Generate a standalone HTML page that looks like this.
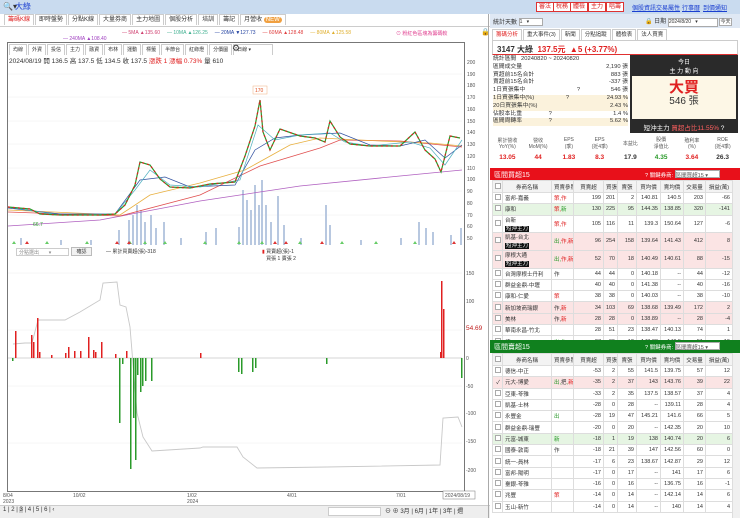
<!DOCTYPE html>
<html><head><meta charset="utf-8"><style>
*{box-sizing:border-box;margin:0;padding:0}
body{width:740px;height:518px;overflow:hidden;background:#fff;font-family:"Liberation Sans","Noto Sans CJK TC",sans-serif;font-size:6px;color:#333;position:relative}
.abs{position:absolute}
.top{left:0;top:0;width:740px;height:14px;background:#c9dbef}
.btn{position:absolute;top:2px;height:10px;border:1px solid #d33;background:#fff;color:#d22;font-size:6px;line-height:8px;padding:0 2px}
.lnk{position:absolute;top:3px;color:#1a3fd0;text-decoration:underline;font-size:6px}
.tabs span{display:inline-block;border:1px solid #ccc;border-bottom:none;padding:1px 3px;margin-right:1px;height:11px;line-height:9px;background:#fff}
table{border-collapse:collapse;table-layout:fixed}
.t td{border:1px solid #ddd;height:11.3px;text-align:right;padding:0 2px;font-size:5.5px;white-space:nowrap;overflow:hidden}
.t td.n{text-align:left}
.t tr.h td{text-align:center;background:#f3f3f3;height:12px}
.pk td{background:#fbe4e4}
.gr td{background:#e6f5e3}
.tag{background:#111;color:#fff;padding:0 1px}
.r{color:#e02020}.g{color:#2a9a2a}
.cb{display:inline-block;width:6px;height:6px;border:1px solid #aaa;background:#fff}
svg path.ln{fill:none}
</style></head><body>
<div class="abs top"></div>
<div class="abs" style="left:3px;top:2px;font-size:8px;color:#333">&#128269;▾</div>
<div class="abs" style="left:15px;top:1px;font-size:8px;color:#1a3fd0">大綠</div>
<div class="btn" style="left:536px">審法</div><div class="btn" style="left:553px">稅務</div><div class="btn" style="left:570px">體檢</div><div class="btn" style="left:588px">主力</div><div class="btn" style="left:606px">唱籌</div>
<div class="lnk" style="left:632px">個股資訊</div><div class="lnk" style="left:656px">交易屬性</div><div class="lnk" style="left:682px">行事曆</div><div class="lnk" style="left:703px">到價通知</div>

<div class="abs tabs" style="left:4px;top:14px;white-space:nowrap"><span style="color:#d22">籌碼K線</span><span>即時盤勢</span><span>分點K線</span><span>大量券商</span><span>主力地圖</span><span>個股分析</span><span>培訓</span><span>籌記</span><span>月營收 <b style="background:#f0a040;color:#fff;border-radius:3px;padding:0 2px;font-weight:normal">NEW</b></span></div>
<div class="abs" style="left:0;top:26px;width:490px;border-top:1px solid #ccc"></div>
<div class="abs" style="left:122px;top:30px;white-space:nowrap;font-size:5px"><span style="color:#d04070">— 5MA ▲135.60</span> &nbsp; &nbsp; <span style="color:#40b090">— 10MA ▲126.25</span> &nbsp; &nbsp; <span style="color:#2040a0">— 20MA ▼127.73</span> &nbsp; &nbsp; <span style="color:#e04040">— 60MA ▲128.48</span> &nbsp; &nbsp; <span style="color:#e0b030">— 80MA ▲125.58</span></div>
<div class="abs" style="left:63px;top:36px;font-size:5px;color:#a040c0">— 240MA ▲108.40</div>
<div class="abs" style="left:396px;top:30px;font-size:5px;color:#e04090">⊙ 粉紅色區塊為籌碼較</div>
<div class="abs" style="left:481px;top:28px;font-size:7px">🔒</div>

<div class="abs" style="left:7px;top:42px;width:458px;height:450px;border:1px solid #777"></div>
<div class="abs tabs" style="left:9px;top:44px;white-space:nowrap;font-size:5px"><span>均線</span><span>外資</span><span>投信</span><span>主力</span><span>融資</span><span>布林</span><span>運動</span><span>標籤</span><span>半節台</span><span>紅綠燈</span><span>分價圖</span><span style="width:40px">日線 ▾</span></div>
<div class="abs" style="left:232px;top:43px;font-size:9px">⚙</div>
<div class="abs" style="left:9px;top:55px;font-size:6.5px;white-space:nowrap">2024/08/19 開 136.5 高 137.5 低 134.5 收 137.5 <span class="r">漲跌 1 漲幅 0.73%</span> 量 610</div>

<svg class="abs" style="left:0;top:0" width="490" height="518" viewBox="0 0 490 518">
<g stroke="#eee" stroke-width=".5">
<path d="M8,74H462M8,97H462M8,121H462M8,144H462M8,168H462M8,191H462M8,215H462M8,273H462M8,330H462M8,386H462M8,443H462"/>
</g>
<g fill="#b8c8e0">
<rect x="118" y="230" width="2" height="15"/><rect x="128" y="220" width="2" height="25"/><rect x="132" y="215" width="2" height="30"/><rect x="136" y="205" width="2" height="40"/><rect x="140" y="210" width="2" height="35"/><rect x="144" y="222" width="2" height="23"/><rect x="150" y="215" width="2" height="30"/><rect x="155" y="228" width="2" height="17"/><rect x="163" y="222" width="2" height="23"/>
<rect x="205" y="232" width="2" height="13"/><rect x="215" y="228" width="2" height="17"/><rect x="238" y="227" width="2" height="18"/><rect x="242" y="190" width="2" height="55"/><rect x="246" y="200" width="2" height="45"/><rect x="250" y="210" width="2" height="35"/><rect x="254" y="185" width="2" height="60"/><rect x="258" y="205" width="2" height="40"/><rect x="261" y="180" width="2" height="65"/><rect x="265" y="205" width="2" height="40"/><rect x="270" y="222" width="2" height="23"/><rect x="277" y="196" width="2" height="49"/><rect x="283" y="225" width="2" height="20"/><rect x="325" y="205" width="2" height="40"/><rect x="329" y="225" width="2" height="20"/><rect x="418" y="222" width="2" height="23"/><rect x="425" y="228" width="2" height="17"/><rect x="432" y="232" width="2" height="13"/><rect x="450" y="235" width="2" height="10"/><rect x="460" y="228" width="2" height="17"/>
<rect x="20" y="238" width="2" height="7"/><rect x="60" y="240" width="2" height="5"/><rect x="90" y="240" width="2" height="5"/><rect x="180" y="238" width="2" height="7"/><rect x="300" y="238" width="2" height="7"/><rect x="360" y="240" width="2" height="5"/><rect x="400" y="238" width="2" height="7"/>
</g>
<path class="ln" stroke="#b060c0" stroke-width="0.8" d="M8,226 L100,220 L200,201 L300,186 L400,176 L462,170"/>
<path class="ln" stroke="#e05050" stroke-width="0.8" d="M8,212 L120,216 L200,195 L260,166 L320,148 L340,140 L400,141 L462,147"/>
<path class="ln" stroke="#e8b040" stroke-width="0.8" d="M8,210 L120,215 L150,195 L200,183 L245,170 L290,145 L320,138 L380,141 L430,143 L462,146"/>
<path class="ln" stroke="#3050a0" stroke-width="0.7" d="M8,208 L60,214 L115,214 L140,180 L165,177 L190,187 L235,185 L255,150 L275,138 L300,135 L340,133 L370,145 L400,146 L425,140 L445,158 L462,145"/>
<path class="ln" stroke="#50b0c0" stroke-width="0.7" d="M8,207 L60,215 L115,214 L135,190 L150,170 L170,185 L200,187 L240,180 L258,125 L275,140 L300,135 L330,133 L345,142 L370,146 L410,142 L430,148 L445,165 L462,140"/>
<path class="ln" stroke="#2a9a2a" stroke-width="1.2" d="M8,207 L30,209 L40,214 L60,215 L100,215 L115,214 L125,205 L135,185 L140,162 L150,165 L160,179 L170,187 L190,188 L210,184 L235,182 L245,156 L255,126 L260,100 L263,132 L270,150 L280,129 L300,136 L315,138 L325,142 L330,121 L340,137 L350,144 L370,146 L400,146 L415,132 L425,150 L435,159 L441,172 L450,136 L460,138"/>
<path class="ln" stroke="#e02020" stroke-width="1.2" stroke-dasharray="2 3" d="M8,207 L30,209 L40,214 L60,215 L100,215 L115,214 L125,205 L135,185 L140,162 L150,165 L160,179 L170,187 L190,188 L210,184 L235,182 L245,156 L255,126 L260,100 L263,132 L270,150 L280,129 L300,136 L315,138 L325,142 L330,121 L340,137 L350,144 L370,146 L400,146 L415,132 L425,150 L435,159 L441,172 L450,136 L460,138"/>
<rect x="253" y="86" width="14" height="8" fill="#fff" stroke="#f0b080" stroke-width=".5"/><text x="255" y="92" font-size="5" fill="#e05020">170</text>
<text x="33" y="226" font-size="5" fill="#2a9a2a">66.7</text>
<g fill="#6c6" ><path d="M12,244 l2,-3 2,3z M45,244 l2,-3 2,3z M85,244 l2,-3 2,3z M128,244 l2,-3 2,3z M143,244 l2,-3 2,3z M163,244 l2,-3 2,3z M203,244 l2,-3 2,3z M237,244 l2,-3 2,3z M260,244 l2,-3 2,3z M298,244 l2,-3 2,3z M340,244 l2,-3 2,3z M374,244 l2,-3 2,3z M413,244 l2,-3 2,3z"/></g>
<g fill="#d33"><path d="M25,244 l2,-3 2,3z M115,244 l2,-3 2,3z M127,244 l2,-3 2,3z M273,244 l2,-3 2,3z M284,244 l2,-3 2,3z M320,244 l2,-3 2,3z M452,244 l2,-3 2,3z"/></g>
<g font-size="5" fill="#555"><text x="467" y="64">200</text><text x="467" y="76">190</text><text x="467" y="87">180</text><text x="467" y="99">170</text><text x="467" y="111">160</text><text x="467" y="123">150</text><text x="467" y="134">140</text><text x="467" y="146">130</text><text x="467" y="158">120</text><text x="467" y="170">110</text><text x="467" y="181">100</text><text x="467" y="193">90</text><text x="467" y="205">80</text><text x="467" y="217">70</text><text x="467" y="228">60</text><text x="467" y="240">50</text>
<text x="466" y="275">150</text><text x="466" y="303">100</text><text x="466" y="360">0</text><text x="466" y="388">-50</text><text x="466" y="415">-100</text><text x="466" y="443">-150</text><text x="466" y="472">-200</text></g>
<text x="466" y="330" font-size="6.5" fill="#c02020">54.69</text>
<path class="ln" stroke="#aaa" stroke-width="0.5" d="M8,358 L462,358"/>
<path class="ln" stroke="#c8c8c8" stroke-width="0.9" d="M13,344 L25,343 L32,343 L38,320 L65,320 L80,312 L100,300 L103,283 L117,282 L120,305 L126,307 L130,327 L137,413 L143,437 L152,451 L200,448 L203,447 L237,447 L243,457 L257,468 L327,467 L440,465 L443,418 L458,417 L462,427"/>
<g fill="#e02020">
<rect x="15" y="331" width="1.5" height="27"/><rect x="31" y="335" width="1.5" height="23"/><rect x="33" y="342" width="1.5" height="16"/><rect x="37" y="318" width="1.5" height="40"/><rect x="39" y="352" width="1.5" height="6"/><rect x="51" y="355" width="1.5" height="3"/><rect x="65" y="353" width="1.5" height="5"/><rect x="68" y="347" width="1.5" height="11"/><rect x="74" y="351" width="1.5" height="7"/><rect x="80" y="351" width="1.5" height="7"/><rect x="88" y="337" width="1.5" height="21"/><rect x="93" y="350" width="1.5" height="8"/><rect x="95" y="352" width="1.5" height="6"/><rect x="101" y="342" width="1.5" height="16"/><rect x="115" y="354" width="1.5" height="4"/><rect x="126" y="351" width="1.5" height="7"/><rect x="200" y="353" width="1.5" height="5"/><rect x="440" y="352" width="1.5" height="6"/><rect x="441" y="281" width="1.5" height="77"/><rect x="443" y="309" width="1.5" height="49"/>
</g>
<g fill="#2a9a2a">
<rect x="12" y="358" width="1.5" height="3"/><rect x="119" y="358" width="1.5" height="65"/><rect x="122" y="358" width="1.5" height="6"/><rect x="130" y="358" width="1.5" height="111"/><rect x="133" y="358" width="1.5" height="60"/><rect x="135" y="358" width="1.5" height="102"/><rect x="137" y="358" width="1.5" height="17"/><rect x="140" y="358" width="1.5" height="34"/><rect x="142" y="358" width="1.5" height="28"/><rect x="145" y="358" width="1.5" height="23"/><rect x="151" y="358" width="1.5" height="23"/><rect x="238" y="358" width="1.5" height="14"/><rect x="241" y="358" width="1.5" height="16"/><rect x="252" y="358" width="1.5" height="14"/><rect x="255" y="358" width="1.5" height="10"/><rect x="326" y="358" width="1.5" height="6"/><rect x="461" y="358" width="1.5" height="20"/>
</g>
<g font-size="5" fill="#555"><text x="3" y="497">8/04</text><text x="3" y="503">2023</text><text x="73" y="497">10/02</text><text x="187" y="497">1/02</text><text x="187" y="503">2024</text><text x="287" y="497">4/01</text><text x="396" y="497">7/01</text></g>
<rect x="443" y="491" width="32" height="8" fill="#fff" stroke="#777" stroke-width=".5"/><text x="445" y="497" font-size="5" fill="#555">2024/08/19</text>
</svg>
<div class="abs" style="left:16px;top:248px;width:53px;height:8px;border:1px solid #ccc;font-size:5px;color:#888;padding-left:2px">分點選出 &nbsp; &nbsp; &nbsp; ▾</div>
<div class="abs" style="left:71px;top:247px;width:21px;height:9px;border:1px solid #bbb;background:#f2f2f2;font-size:5px;text-align:center">確認</div>
<div class="abs" style="left:106px;top:248px;font-size:5px">— 累計買賣超(張)-318</div>
<div class="abs" style="left:262px;top:248px;font-size:5px"><span class="r">▮</span> 買賣超(張)-1<br>&nbsp;&nbsp;&nbsp;買張 1 賣張 2</div>
<div class="abs" style="left:0;top:505px;width:490px;height:13px;background:#eee;border-top:1px solid #ccc"></div>
<div class="abs" style="left:3px;top:507px;font-size:6px;white-space:nowrap">1 | 2 | <span style="background:#ccc">3</span> | 4 | 5 | 6 | ‹</div>
<div class="abs" style="left:328px;top:507px;width:53px;height:9px;background:#fff;border:1px solid #ccc"></div>
<div class="abs" style="left:385px;top:506px;font-size:6px;white-space:nowrap">⊖ ⊕ 3月 | 6月 | 1年 | 3年 | 週</div>
<div class="abs" style="left:488px;top:14px;width:1px;height:504px;background:#aaa"></div>

<!-- right panel -->
<div class="abs" style="left:490px;top:14px;width:250px;height:14px;background:#dfe8f4"></div>
<div class="abs" style="left:493px;top:17px;font-size:6px">統計天數 <span style="display:inline-block;width:24px;height:8px;background:#fff;border:1px solid #aaa;vertical-align:middle;font-size:5px">1 &nbsp; ▾</span></div>
<div class="abs" style="left:645px;top:16px;font-size:6px;white-space:nowrap">🔒 日期 <span style="display:inline-block;width:50px;height:9px;background:#fff;border:1px solid #aaa;font-size:5px">2024/8/20 &nbsp; ▾</span> <span style="border:1px solid #aaa;background:#fff;font-size:5px">今天</span></div>
<div class="abs tabs" style="left:492px;top:29px;white-space:nowrap;font-size:5.5px"><span class="r">籌碼分析</span><span>重大事件(3)</span><span>新聞</span><span>分點追蹤</span><span>體檢表</span><span>法人買賣</span></div>
<div class="abs" style="left:492px;top:40px;width:246px;height:15px;border:1px solid #ccc;border-bottom:1.5px solid #e03030;font-size:8px;font-weight:bold;padding:3px 4px;white-space:nowrap">3147 大綠 &nbsp;<span class="r">137.5元 &nbsp;▲5 (+3.77%)</span></div>
<div class="abs" style="left:493px;top:56px;width:135px;font-size:5.8px;line-height:7.8px">
<div>統計區間 &nbsp; 20240820 ~ 20240820</div>
<div>區間成交量<span style="float:right">2,190 張</span></div>
<div>買超前15名合計<span style="float:right">883 張</span></div>
<div>賣超前15名合計<span style="float:right">-337 張</span></div>
<div>1日買張集中 <span style="margin-left:50px">?</span><span style="float:right">546 張</span></div>
<div style="background:#fbf2dc">1日買張集中(%) <span style="margin-left:30px">?</span><span style="float:right">24.93 %</span></div>
<div style="background:#fbf2dc">20日買張集中(%)<span style="float:right">2.43 %</span></div>
<div>佔股本比重 <span style="margin-left:25px">?</span><span style="float:right">1.4 %</span></div>
<div style="background:#fbf2dc">區間周轉率 <span style="margin-left:25px">?</span><span style="float:right">5.62 %</span></div>
</div>
<div class="abs" style="left:630px;top:55px;width:108px;height:78px;background:#2a2a2a"></div>
<div class="abs" style="left:632px;top:57px;width:104px;height:10px;color:#fff;text-align:center;font-size:6px">今日</div>
<div class="abs" style="left:632px;top:66px;width:104px;height:9px;color:#fff;text-align:center;font-size:6px">主 力 動 向</div>
<div class="abs" style="left:632px;top:76px;width:104px;height:43px;background:#fdf7e6;text-align:center"><div class="r" style="font-size:15px;font-weight:bold;margin-top:4px;line-height:16px">大買</div><div style="font-size:10px;line-height:12px">546 張</div></div>
<div class="abs" style="left:632px;top:122px;width:104px;color:#fff;text-align:center;font-size:6.5px">短沖主力 <span style="color:#ff6060">買超占比11.55%</span> ?</div>
<table class="abs" style="left:492px;top:136px;width:246px;font-size:5px;text-align:center">
<tr style="height:14px;color:#555"><td>累計營收<br>YoY(%)</td><td>營收<br>MoM(%)</td><td>EPS<br>(季)</td><td>EPS<br>(近4季)</td><td>本益比</td><td>股價<br>淨值比</td><td>殖利率<br>(%)</td><td>ROE<br>(近4季)</td></tr>
<tr style="height:14px;font-size:6.5px;font-weight:bold"><td class="r">13.05</td><td class="r">44</td><td class="r">1.83</td><td class="r">8.3</td><td>17.9</td><td class="g">4.35</td><td class="r">3.64</td><td>26.3</td></tr></table>
<div class="abs" style="left:490px;top:168px;width:250px;height:12px;background:#e8101a;color:#fff;font-size:7px;padding:2px 4px">區間買超15<span style="position:absolute;left:155px;font-size:5.5px">? 關鍵券商: <span style="display:inline-block;width:45px;height:8px;background:#fff;color:#555;border:1px solid #aaa">區間買超15 ▾</span></span></div>
<table class="abs t" style="left:492px;top:180px;width:240px">
<colgroup><col style="width:10px"><col style="width:49px"><col style="width:22px"><col style="width:30px"><col style="width:14px"><col style="width:19px"><col style="width:24px"><col style="width:23px"><col style="width:22px"><col style="width:27px"></colgroup>
<tr class="h"><td><i class="cb"></i></td><td>券商名稱</td><td>買賣參照</td><td>買賣超</td><td>買張</td><td>賣張</td><td>買均價</td><td>賣均價</td><td>交易量</td><td>損益(萬)</td></tr>
<tr><td><i class="cb"></i></td><td class="n">富邦-嘉義</td><td class="n r">策,作</td><td>199</td><td>201</td><td>2</td><td>140.81</td><td>140.5</td><td>203</td><td>-66</td></tr>
<tr class="gr"><td><i class="cb"></i></td><td class="n">康和</td><td class="n r">策,<span class="g">新</span></td><td>130</td><td>225</td><td>95</td><td>144.35</td><td>138.85</td><td>320</td><td>-141</td></tr>
<tr><td style="height:17px"><i class="cb"></i></td><td class="n">台新<br><span class="tag">短沖主力</span></td><td class="n r">策,作</td><td>105</td><td>116</td><td>11</td><td>139.3</td><td>150.64</td><td>127</td><td>-6</td></tr>
<tr class="pk"><td style="height:18px"><i class="cb"></i></td><td class="n">凱基-台北<br><span class="tag">短沖主力</span></td><td class="n g">出,<span class="r">作,新</span></td><td>96</td><td>254</td><td>158</td><td>139.64</td><td>141.43</td><td>412</td><td>8</td></tr>
<tr class="pk"><td style="height:18px"><i class="cb"></i></td><td class="n">摩根大通<br><span class="tag">短沖主力</span></td><td class="n g">出,<span class="r">作,新</span></td><td>52</td><td>70</td><td>18</td><td>140.49</td><td>140.61</td><td>88</td><td>-15</td></tr>
<tr><td><i class="cb"></i></td><td class="n">台灣摩根士丹利</td><td class="n">作</td><td>44</td><td>44</td><td>0</td><td>140.18</td><td>--</td><td>44</td><td>-12</td></tr>
<tr><td><i class="cb"></i></td><td class="n">群益金鼎-中壢</td><td></td><td>40</td><td>40</td><td>0</td><td>141.38</td><td>--</td><td>40</td><td>-16</td></tr>
<tr><td><i class="cb"></i></td><td class="n">康和-仁愛</td><td class="n r">策</td><td>38</td><td>38</td><td>0</td><td>140.03</td><td>--</td><td>38</td><td>-10</td></tr>
<tr class="pk"><td><i class="cb"></i></td><td class="n">新加坡商瑞銀</td><td class="n">作,<span class="r">新</span></td><td>34</td><td>103</td><td>69</td><td>138.68</td><td>139.49</td><td>172</td><td>2</td></tr>
<tr class="pk"><td><i class="cb"></i></td><td class="n">美林</td><td class="n">作,<span class="r">新</span></td><td>28</td><td>28</td><td>0</td><td>138.89</td><td>--</td><td>28</td><td>-4</td></tr>
<tr><td><i class="cb"></i></td><td class="n">華南永昌-竹北</td><td></td><td>28</td><td>51</td><td>23</td><td>138.47</td><td>140.13</td><td>74</td><td>1</td></tr>
<tr><td><i class="cb"></i></td><td class="n">統一</td><td class="n g">出,作</td><td>27</td><td>39</td><td>12</td><td>143.38</td><td>140.5</td><td>51</td><td>-19</td></tr>
</table>
<div class="abs" style="left:490px;top:340px;width:250px;height:13px;background:#10801e;color:#fff;font-size:7px;padding:2px 4px">區間賣超15<span style="position:absolute;left:155px;font-size:5.5px">? 關鍵券商: <span style="display:inline-block;width:45px;height:8px;background:#fff;color:#555;border:1px solid #aaa">區間賣超15 ▾</span></span></div>
<table class="abs t" style="left:492px;top:353px;width:240px">
<colgroup><col style="width:10px"><col style="width:49px"><col style="width:22px"><col style="width:30px"><col style="width:14px"><col style="width:19px"><col style="width:24px"><col style="width:23px"><col style="width:22px"><col style="width:27px"></colgroup>
<tr class="h"><td><i class="cb"></i></td><td>券商名稱</td><td>買賣參照</td><td>買賣超</td><td>買張</td><td>賣張</td><td>買均價</td><td>賣均價</td><td>交易量</td><td>損益(萬)</td></tr>
<tr><td><i class="cb"></i></td><td class="n">德信-中正</td><td></td><td>-53</td><td>2</td><td>55</td><td>141.5</td><td>139.75</td><td>57</td><td>12</td></tr>
<tr class="pk"><td>✓</td><td class="n">元大-博愛</td><td class="n g">出,<span style="color:#333">把</span>,<span class="r">新</span></td><td>-35</td><td>2</td><td>37</td><td>143</td><td>143.76</td><td>39</td><td>22</td></tr>
<tr><td><i class="cb"></i></td><td class="n">亞東-苓雅</td><td></td><td>-33</td><td>2</td><td>35</td><td>137.5</td><td>138.57</td><td>37</td><td>4</td></tr>
<tr><td><i class="cb"></i></td><td class="n">凱基-士林</td><td></td><td>-28</td><td>0</td><td>28</td><td>--</td><td>139.11</td><td>28</td><td>4</td></tr>
<tr><td><i class="cb"></i></td><td class="n">永豐金</td><td class="n g">出</td><td>-28</td><td>19</td><td>47</td><td>145.21</td><td>141.6</td><td>66</td><td>5</td></tr>
<tr><td><i class="cb"></i></td><td class="n">群益金鼎-瑞豐</td><td></td><td>-20</td><td>0</td><td>20</td><td>--</td><td>142.35</td><td>20</td><td>10</td></tr>
<tr class="gr"><td><i class="cb"></i></td><td class="n">元富-城東</td><td class="n g">新</td><td>-18</td><td>1</td><td>19</td><td>138</td><td>140.74</td><td>20</td><td>6</td></tr>
<tr><td><i class="cb"></i></td><td class="n">國泰-敦南</td><td class="n">作</td><td>-18</td><td>21</td><td>39</td><td>147</td><td>142.56</td><td>60</td><td>0</td></tr>
<tr><td><i class="cb"></i></td><td class="n">統一-員林</td><td></td><td>-17</td><td>6</td><td>23</td><td>138.67</td><td>142.87</td><td>29</td><td>12</td></tr>
<tr><td><i class="cb"></i></td><td class="n">富邦-陽明</td><td></td><td>-17</td><td>0</td><td>17</td><td>--</td><td>141</td><td>17</td><td>6</td></tr>
<tr><td><i class="cb"></i></td><td class="n">臺銀-苓雅</td><td></td><td>-16</td><td>0</td><td>16</td><td>--</td><td>136.75</td><td>16</td><td>-1</td></tr>
<tr><td><i class="cb"></i></td><td class="n">兆豐</td><td class="n r">策</td><td>-14</td><td>0</td><td>14</td><td>--</td><td>142.14</td><td>14</td><td>6</td></tr>
<tr><td><i class="cb"></i></td><td class="n">玉山-新竹</td><td></td><td>-14</td><td>0</td><td>14</td><td>--</td><td>140</td><td>14</td><td>4</td></tr>
</table>
<div class="abs" style="left:732px;top:180px;width:8px;height:160px;background:#f0f0f0;border-left:1px solid #ddd"></div>
<div class="abs" style="left:732px;top:353px;width:8px;height:165px;background:#f0f0f0;border-left:1px solid #ddd"></div>
</body></html>
